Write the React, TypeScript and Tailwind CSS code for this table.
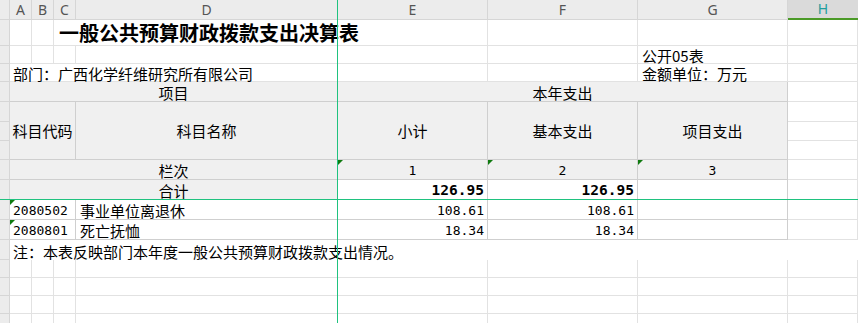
import React from "react";

const G = "border-r border-b border-[#e2e2e2]"; // gridline
const T = "border-r border-b border-[#cfcfcf]"; // table border
const RH = "border-r border-b border-[#d6d6d6] bg-[#ececec]";
const MONO = "font-['DejaVu_Sans_Mono','Liberation_Mono',monospace]";

function Tri() {
  return (
    <svg className="absolute left-0 top-0" width="5" height="5" viewBox="0 0 5 5">
      <polygon points="0,0 5,0 0,5" fill="#0f7a0f" />
    </svg>
  );
}

function ColHead({ l, sel }: { l: string; sel?: boolean }) {
  return sel ? (
    <div className="flex items-center justify-center bg-[#dadada] border-b-2 border-[#4b9a27] text-[#1f9d9d] text-[14px] font-['Noto_Sans',sans-serif]">
      {l}
    </div>
  ) : (
    <div className="flex items-center justify-center bg-[#ececec] border-r border-b border-[#d6d6d6] text-[#555] text-[14px] font-['Noto_Sans',sans-serif]">
      {l}
    </div>
  );
}

export default function App() {
  return (
    <div className="relative w-[858px] h-[323px] overflow-hidden bg-white text-black font-['Noto_Sans_CJK_SC',sans-serif] text-[15px] leading-none">
      <div className="grid grid-cols-[10px_22px_22px_22px_262px_150px_150px_150px_70px] grid-rows-[20px_26px_18px_18px_20px_20px_19px_19px_20px_20px_20px_20px_20px_18px_18px_18px_18px]">
        {/* header row */}
        <div className="bg-[#ececec] border-r border-b border-[#d6d6d6]" />
        <ColHead l="A" />
        <ColHead l="B" />
        <ColHead l="C" />
        <ColHead l="D" />
        <ColHead l="E" />
        <ColHead l="F" />
        <ColHead l="G" />
        <ColHead l="H" sel />

        {/* row 1 title */}
        <div className={RH} />
        <div className={G} />
        <div className={G} />
        <div className={`${G} col-span-3 flex items-center pl-[5px] text-[20px] font-bold whitespace-nowrap`}>
          一般公共预算财政拨款支出决算表
        </div>
        <div className={G} />
        <div className={G} />
        <div className={G} />

        {/* row 2 */}
        <div className={RH} />
        <div className={G} />
        <div className={G} />
        <div className={G} />
        <div className={G} />
        <div className={G} />
        <div className={G} />
        <div className={`${G} flex items-center pt-[1px] pl-[4px] whitespace-nowrap`}>公开05表</div>
        <div className={G} />

        {/* row 3 */}
        <div className={RH} />
        <div className={`${G} col-span-4 flex items-center pt-[2px] pl-[3px] whitespace-nowrap`}>
          部门：广西化学纤维研究所有限公司
        </div>
        <div className={G} />
        <div className={G} />
        <div className={`${G} flex items-center pt-[2px] pl-[4px] whitespace-nowrap`}>金额单位：万元</div>
        <div className={G} />

        {/* row 4 */}
        <div className={RH} />
        <div className={`${T} col-span-4 bg-[#f0f0f0] flex items-center justify-center pt-[1px]`}>项目</div>
        <div className={`${T} col-span-3 bg-[#f0f0f0] flex items-center justify-center pt-[1px]`}>本年支出</div>
        <div className={G} />

        {/* rows 5-7 */}
        <div className={RH} />
        <div className={`${T} col-span-3 row-span-3 bg-[#f0f0f0] flex items-center justify-center whitespace-nowrap`}>科目代码</div>
        <div className={`${T} row-span-3 bg-[#f0f0f0] flex items-center justify-center`}>科目名称</div>
        <div className={`${T} row-span-3 bg-[#f0f0f0] flex items-center justify-center`}>小计</div>
        <div className={`${T} row-span-3 bg-[#f0f0f0] flex items-center justify-center`}>基本支出</div>
        <div className={`${T} row-span-3 bg-[#f0f0f0] flex items-center justify-center`}>项目支出</div>
        <div className={G} />
        <div className={RH} />
        <div className={G} />
        <div className={RH} />
        <div className={G} />

        {/* row 8 栏次 */}
        <div className={RH} />
        <div className={`${T} col-span-4 bg-[#f0f0f0] flex items-center justify-center pt-[2px]`}>栏次</div>
        <div className={`${T} relative bg-[#f0f0f0] flex items-center justify-center pt-[2px] ${MONO} text-[13px]`}>
          <Tri />1
        </div>
        <div className={`${T} relative bg-[#f0f0f0] flex items-center justify-center pt-[2px] ${MONO} text-[13px]`}>
          <Tri />2
        </div>
        <div className={`${T} relative bg-[#f0f0f0] flex items-center justify-center pt-[2px] ${MONO} text-[13px]`}>
          <Tri />3
        </div>
        <div className={G} />

        {/* row 9 合计 */}
        <div className={RH} />
        <div className={`${T} col-span-4 bg-[#f0f0f0] flex items-center justify-center pt-[2px]`}>合计</div>
        <div className={`${T} flex items-center justify-end pr-[3px] pt-[2px] ${MONO} text-[14.5px] font-bold`}>126.95</div>
        <div className={`${T} flex items-center justify-end pr-[3px] pt-[2px] ${MONO} text-[14.5px] font-bold`}>126.95</div>
        <div className={T} />
        <div className={G} />

        {/* row 10 */}
        <div className={RH} />
        <div className={`${T} col-span-3 relative flex items-center pl-[3px] pt-[2px] ${MONO} text-[13px]`}>
          <Tri />2080502
        </div>
        <div className={`${T} flex items-center pl-[4px] pt-[2px] whitespace-nowrap`}>事业单位离退休</div>
        <div className={`${T} flex items-center justify-end pr-[3px] pt-[2px] ${MONO} text-[13px]`}>108.61</div>
        <div className={`${T} flex items-center justify-end pr-[3px] pt-[2px] ${MONO} text-[13px]`}>108.61</div>
        <div className={T} />
        <div className={G} />

        {/* row 11 */}
        <div className={RH} />
        <div className={`${T} col-span-3 relative flex items-center pl-[3px] pt-[2px] ${MONO} text-[13px]`}>
          <Tri />2080801
        </div>
        <div className={`${T} flex items-center pl-[4px] pt-[2px] whitespace-nowrap`}>死亡抚恤</div>
        <div className={`${T} flex items-center justify-end pr-[3px] pt-[2px] ${MONO} text-[13px]`}>18.34</div>
        <div className={`${T} flex items-center justify-end pr-[3px] pt-[2px] ${MONO} text-[13px]`}>18.34</div>
        <div className={T} />
        <div className={G} />

        {/* row 12 note */}
        <div className={RH} />
        <div className="col-span-8 flex items-center pl-[3px] pt-[2px] whitespace-nowrap">
          注：本表反映部门本年度一般公共预算财政拨款支出情况。
        </div>

        {/* rows 13-16 empty */}
        {[0, 1, 2, 3].map((r) => (
          <React.Fragment key={r}>
            <div className={RH} />
            <div className={G} />
            <div className={G} />
            <div className={G} />
            <div className={G} />
            <div className={G} />
            <div className={G} />
            <div className={G} />
            <div className={G} />
          </React.Fragment>
        ))}
      </div>

      {/* freeze pane lines */}
      <svg className="absolute left-0 top-0 pointer-events-none" width="858" height="323" viewBox="0 0 858 323" shapeRendering="crispEdges">
        <rect x="337" y="0" width="1" height="323" fill="#1fc27f" />
        <rect x="0" y="199" width="858" height="1" fill="#1fc27f" />
      </svg>
    </div>
  );
}
